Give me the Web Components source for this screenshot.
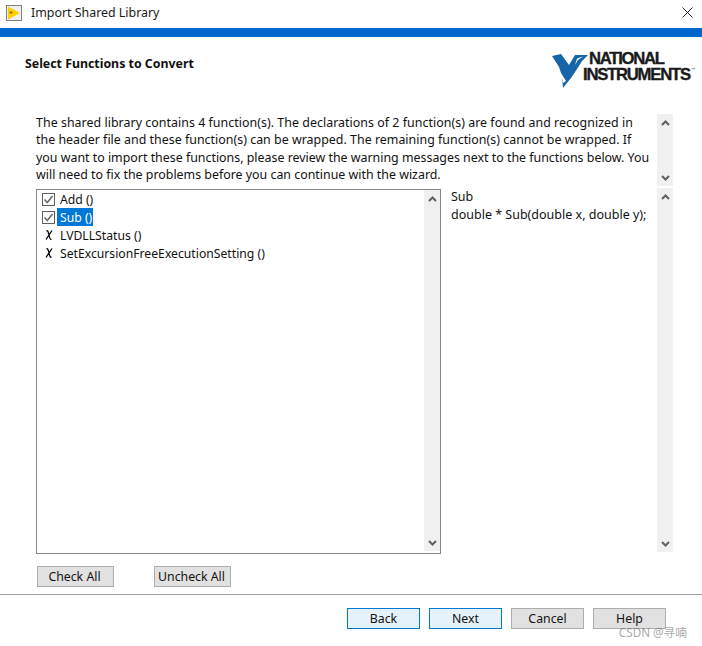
<!DOCTYPE html>
<html>
<head>
<meta charset="utf-8">
<title>Import Shared Library</title>
<style>
  html, body { margin: 0; background: #fff; }
  body { font-family: "Noto Sans", "Open Sans", sans-serif; font-size: 12.4px; color: #000; }
</style>
</head>
<body>
<template id="t-titlebar">
  <style>
    :host { display: flex; align-items: center; height: 28px; background: #fff; color: #1a1a1a; }
    svg { display: block; }
    .icon { margin: -3px 0 0 6px; }
    .title { margin-left: 9px; flex: 1; font-size: 12.4px; position: relative; top: -2px; }
    .close { margin: -4px 9px 0 0; }
  </style>
  <svg class="icon" width="16" height="16" viewBox="0 0 16 16">
    <rect x=".5" y=".5" width="15" height="15" fill="#efefef" stroke="#808080"/>
    <path d="M2 1.5 L14 8 L2 14.5 Z" fill="#ffd000"/>
    <path d="M3.5 7.5h3M5 6v3" stroke="#8a6d00" stroke-width="1"/>
  </svg>
  <span class="title"><slot></slot></span>
  <svg class="close" width="11" height="11" viewBox="0 0 11 11"><path d="M.5 .5 L10.5 10.5 M10.5 .5 L.5 10.5" stroke="#222" stroke-width="1" fill="none"/></svg>
</template>

<template id="t-ni-logo">
  <style>
    :host { display: flex; align-items: flex-start; width: 145px; height: 44px; font-family: "Liberation Sans", Arial, sans-serif; }
    svg { display: block; flex: none; margin-right: -6px; position: relative; z-index: 1; }
    .words { margin-top: 5px; color: #1a1a1a; font-weight: 700; font-size: 16.7px; line-height: 16px; display: flex; flex-direction: column; white-space: nowrap; -webkit-text-stroke: .35px #1a1a1a; }
    .a { letter-spacing: -1.3px; margin-left: 6px; }
    .b { letter-spacing: -1.25px; }
    sup { font-size: 4px; line-height: 0; letter-spacing: 0; -webkit-text-stroke: 0; vertical-align: 9px; margin-left: 1.5px; color: #555; }
  </style>
  <svg width="41" height="44" viewBox="0 0 41 44">
    <path d="M4 10 L13 8 L21 19 L27 9 L40 9 L34 15 L29 23 L23 32 L15 42 L14 30 L11 21 Z" fill="#1565a8"/>
    <path d="M29 12.5 L35 10.5 L30 14 L27 19 Z" fill="#fff"/>
    <path d="M13 27 L18 35 L15 37 Z" fill="#fff"/>
  </svg>
  <div class="words"><span class="a">NATIONAL</span><span class="b">INSTRUMENTS<sup>™</sup></span></div>
</template>

<template id="t-scroll-rail">
  <style>
    :host { display: flex; flex-direction: column; justify-content: space-between; width: 16px; background: #f0f0f0; flex: none; }
    .b { height: 17px; display: flex; align-items: center; justify-content: center; }
    svg { display: block; }
  </style>
  <div class="b"><svg width="9" height="6" viewBox="0 0 9 6"><path d="M1 5 L4.5 1.5 L8 5" fill="none" stroke="#606060" stroke-width="2"/></svg></div>
  <div class="b"><svg width="9" height="6" viewBox="0 0 9 6"><path d="M1 1 L4.5 4.5 L8 1" fill="none" stroke="#606060" stroke-width="2"/></svg></div>
</template>

<template id="t-fn-row">
  <style>
    :host { display: flex; align-items: center; height: 18px; font-size: 12.2px; }
    .mark { width: 13px; height: 16px; margin-left: 5px; display: flex; align-items: center; justify-content: center; flex: none; }
    svg { display: block; }
    .name { margin-left: 2px; padding: 0 1px 0 3px; height: 18px; line-height: 19px; color: #111; }
    :host([selected]) .name { background: #0078d7; color: #fff; }
  </style>
  <div class="mark" id="mark"></div>
  <span class="name"><slot></slot></span>
</template>

<template id="t-ni-button">
  <style>
    :host { display: inline-block; }
    button {
      display: block; box-sizing: border-box; width: 73px; height: 21px; padding: 0 0 1px;
      font: inherit; font-size: 12.3px; color: #111; background: #e1e1e1; border: 1px solid #adadad; border-radius: 0;
    }
    :host([accent]) button { background: #e5f1fb; border-color: #0078d7; }
    :host([wide]) button { width: 77px; padding-right: 2px; }
  </style>
  <button type="button"><slot></slot></button>
</template>

<script>
function plantilla(id) { return document.getElementById(id).content.cloneNode(true); }

class SimpleBox extends HTMLElement {
  constructor() {
    super();
    this.attachShadow({ mode: 'open' }).appendChild(plantilla(this.constructor.tpl));
  }
}
class NiTitlebar extends SimpleBox { static tpl = 't-titlebar'; }
class NiLogo extends SimpleBox { static tpl = 't-ni-logo'; }
class NiScrollRail extends SimpleBox { static tpl = 't-scroll-rail'; }
class NiButton extends SimpleBox { static tpl = 't-ni-button'; }

class NiFnRow extends SimpleBox {
  static tpl = 't-fn-row';
  connectedCallback() {
    const mark = this.shadowRoot.getElementById('mark');
    if (this.getAttribute('state') === 'checked') {
      mark.innerHTML = '<svg width="13" height="13" viewBox="0 0 13 13"><rect x=".5" y=".5" width="12" height="12" fill="#fff" stroke="#5f5f5f"/><path d="M2.5 6.5 L5.3 9.5 L10.5 3" fill="none" stroke="#6a6a6a" stroke-width="1.6"/></svg>';
    } else {
      mark.innerHTML = '<svg width="8" height="10" viewBox="0 0 8 10"><path d="M1.5 .5 C3 .5 3.5 2 4 5 C4.5 8 5 9.5 6.5 9.5 M7 .5 L1 9.5" fill="none" stroke="#000" stroke-width="1.3"/></svg>';
    }
  }
}

class NiDialog extends HTMLElement {
  constructor() {
    super();
    this.attachShadow({ mode: 'open' }).innerHTML = `
      <style>
        :host { display: block; position: relative; width: 702px; height: 646px; overflow: hidden; background: #fff; }
        .band { height: 9px; background: #0066cc; }
        .head { display: flex; justify-content: space-between; height: 77px; padding: 0 9px 0 25px; }
        h1 { margin: 18px 0 0; font-size: 12.35px; font-weight: 700; color: #111; }
        ni-logo { margin-top: 9px; }
        .row1 { display: flex; height: 72px; margin: 0 29px 0 36px; }
        .intro { flex: 1; margin: 0; line-height: 17.3px; color: #111; white-space: nowrap; }
        .l1 { letter-spacing: .04px; }
        .l2 { letter-spacing: .02px; }
        .row2 { display: flex; margin: 2px 29px 0 36px; height: 366px; }
        .list { box-sizing: border-box; width: 405px; height: 365px; margin-top: 1px; border: 1px solid #828790; display: flex; }
        .rows { flex: 1; }
        .list ni-scroll-rail { height: 361px; }
        .detail { flex: 1; margin: 0; padding-left: 10px; line-height: 18px; color: #111; white-space: nowrap; font-size: 12.5px; }
        .row2 > ni-scroll-rail { height: 364px; }
        .row3 { display: flex; gap: 40px; margin: 12px 0 0 37px; }
        .sep { height: 1px; margin-top: 7px; background: #a0a0a0; }
        .row4 { display: flex; gap: 9px; margin: 13px 0 0 347px; }
        .mark { position: absolute; right: 15px; bottom: 6px; font: 11.7px "Noto Sans", "Noto Sans CJK SC", sans-serif; color: rgba(90,90,90,.55); }
      </style>
      <ni-titlebar>Import Shared Library</ni-titlebar>
      <div class="band"></div>
      <div class="head">
        <h1>Select Functions to Convert</h1>
        <ni-logo></ni-logo>
      </div>
      <div class="row1">
        <p class="intro"><span class="l1">The shared library contains 4 function(s). The declarations of 2 function(s) are found and recognized in</span><br><span class="l2">the header file and these function(s) can be wrapped. The remaining function(s) cannot be wrapped. If</span><br>you want to import these functions, please review the warning messages next to the functions below. You<br>will need to fix the problems before you can continue with the wizard.</p>
        <ni-scroll-rail></ni-scroll-rail>
      </div>
      <div class="row2">
        <div class="list">
          <div class="rows">
            <ni-fn-row state="checked">Add ()</ni-fn-row>
            <ni-fn-row state="checked" selected>Sub ()</ni-fn-row>
            <ni-fn-row state="bad">LVDLLStatus ()</ni-fn-row>
            <ni-fn-row state="bad">SetExcursionFreeExecutionSetting ()</ni-fn-row>
          </div>
          <ni-scroll-rail></ni-scroll-rail>
        </div>
        <p class="detail">Sub<br>double * Sub(double x, double y);</p>
        <ni-scroll-rail></ni-scroll-rail>
      </div>
      <div class="row3">
        <ni-button wide>Check All</ni-button>
        <ni-button wide>Uncheck All</ni-button>
      </div>
      <div class="sep"></div>
      <div class="row4">
        <ni-button accent>Back</ni-button>
        <ni-button accent>Next</ni-button>
        <ni-button>Cancel</ni-button>
        <ni-button>Help</ni-button>
      </div>
      <span class="mark">CSDN @寻喃</span>`;
  }
}

customElements.define('ni-titlebar', NiTitlebar);
customElements.define('ni-logo', NiLogo);
customElements.define('ni-scroll-rail', NiScrollRail);
customElements.define('ni-button', NiButton);
customElements.define('ni-fn-row', NiFnRow);
customElements.define('ni-dialog', NiDialog);
</script>
<ni-dialog></ni-dialog>
</body>
</html>
